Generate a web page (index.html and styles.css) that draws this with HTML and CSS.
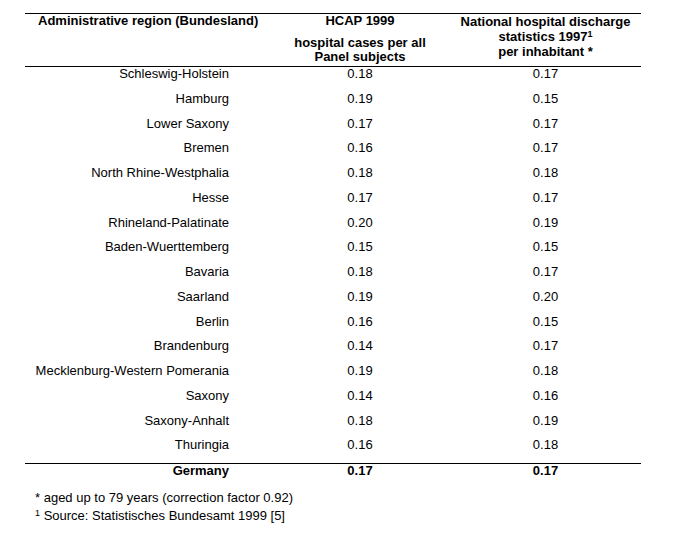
FILE: index.html
```html
<!DOCTYPE html>
<html lang="en">
<head>
<meta charset="utf-8">
<title>Hospital cases by Bundesland</title>
<link rel="stylesheet" href="styles.css">
</head>
<body>
<div class="page">
  <div class="table">
    <div class="row head">
      <div class="cell region-head">Administrative region (Bundesland)</div>
      <div class="cell num-head">
        <div>HCAP 1999</div>
        <div class="sub">hospital cases per all<br>Panel subjects</div>
      </div>
      <div class="cell num-head nat">National hospital discharge<br>statistics 1997<sup>1</sup><br>per inhabitant *</div>
    </div>
    <div class="body">
      <div class="row"><div class="cell region">Schleswig-Holstein</div><div class="cell num">0.18</div><div class="cell num">0.17</div></div>
      <div class="row"><div class="cell region">Hamburg</div><div class="cell num">0.19</div><div class="cell num">0.15</div></div>
      <div class="row"><div class="cell region">Lower Saxony</div><div class="cell num">0.17</div><div class="cell num">0.17</div></div>
      <div class="row"><div class="cell region">Bremen</div><div class="cell num">0.16</div><div class="cell num">0.17</div></div>
      <div class="row"><div class="cell region">North Rhine-Westphalia</div><div class="cell num">0.18</div><div class="cell num">0.18</div></div>
      <div class="row"><div class="cell region">Hesse</div><div class="cell num">0.17</div><div class="cell num">0.17</div></div>
      <div class="row"><div class="cell region">Rhineland-Palatinate</div><div class="cell num">0.20</div><div class="cell num">0.19</div></div>
      <div class="row"><div class="cell region">Baden-Wuerttemberg</div><div class="cell num">0.15</div><div class="cell num">0.15</div></div>
      <div class="row"><div class="cell region">Bavaria</div><div class="cell num">0.18</div><div class="cell num">0.17</div></div>
      <div class="row"><div class="cell region">Saarland</div><div class="cell num">0.19</div><div class="cell num">0.20</div></div>
      <div class="row"><div class="cell region">Berlin</div><div class="cell num">0.16</div><div class="cell num">0.15</div></div>
      <div class="row"><div class="cell region">Brandenburg</div><div class="cell num">0.14</div><div class="cell num">0.17</div></div>
      <div class="row"><div class="cell region">Mecklenburg-Western Pomerania</div><div class="cell num">0.19</div><div class="cell num">0.18</div></div>
      <div class="row"><div class="cell region">Saxony</div><div class="cell num">0.14</div><div class="cell num">0.16</div></div>
      <div class="row"><div class="cell region">Saxony-Anhalt</div><div class="cell num">0.18</div><div class="cell num">0.19</div></div>
      <div class="row"><div class="cell region">Thuringia</div><div class="cell num">0.16</div><div class="cell num">0.18</div></div>
    </div>
    <div class="row total"><div class="cell region">Germany</div><div class="cell num">0.17</div><div class="cell num">0.17</div></div>
  </div>
  <div class="notes">
    <div>* aged up to 79 years (correction factor 0.92)</div>
    <div><sup>1</sup> Source: Statistisches Bundesamt 1999 [5]</div>
  </div>
</div>
</body>
</html>
```
FILE: styles.css
```css
html, body {
  margin: 0;
  background: #fff;
}
body {
  font-family: "Liberation Sans", Arial, sans-serif;
  font-size: 13px;
  color: #000;
}
.page {
  padding: 13px 0 0 25px;
}
.table {
  width: 616px;
  border-top: 1px solid #000;
}
.row {
  display: grid;
  grid-template-columns: 245px 180px 191px;
  height: 24.75px;
  line-height: 14px;
}
.head {
  height: 52px;
  border-bottom: 1px solid #000;
  font-weight: bold;
}
.region-head {
  padding-left: 13px;
}
.num-head {
  text-align: center;
}
.num-head .sub {
  margin-top: 8px;
}
.nat {
  line-height: 15px;
}
sup {
  font-size: 9px;
  line-height: 0;
  vertical-align: 4px;
}
.body {
  border-bottom: 1px solid #000;
}
.region {
  text-align: right;
  padding-right: 41px;
}
.num {
  text-align: center;
}
.total {
  height: 25px;
  font-weight: bold;
}
.notes {
  padding-left: 10px;
  line-height: 18px;
}
```
